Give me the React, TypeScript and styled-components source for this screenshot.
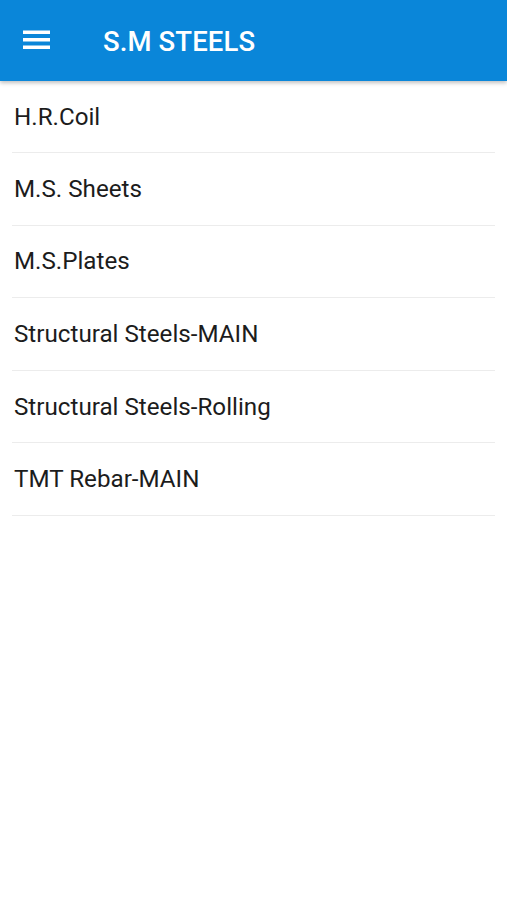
import React from "react";
import styled, { createGlobalStyle } from "styled-components";

const GlobalStyle = createGlobalStyle`
  html, body {
    margin: 0;
    padding: 0;
    background: #ffffff;
    font-family: Roboto, "Liberation Sans", sans-serif;
  }
`;

const Page = styled.div`
  width: 507px;
  min-height: 900px;
  background: #ffffff;
`;

const AppBar = styled.header`
  height: 81px;
  background: #0a86d9;
  display: flex;
  align-items: center;
  box-shadow: 0 2px 4px rgba(0, 0, 0, 0.25);
  position: relative;
  z-index: 2;
`;

const MenuButton = styled.button`
  width: 27px;
  height: 24px;
  margin-left: 23px;
  margin-bottom: 2px;
  padding: 0;
  border: none;
  background: transparent;
  display: flex;
  align-items: center;
  justify-content: center;
  cursor: pointer;
`;

const Title = styled.h1`
  margin: 2px 0 0 53px;
  color: #ffffff;
  font-size: 27.5px;
  font-weight: 500;
  letter-spacing: 0.1px;
`;

const List = styled.ul`
  list-style: none;
  margin: 0;
  padding: 0 12px;
`;

const Item = styled.li<{ $first?: boolean }>`
  height: ${(p) => (p.$first ? "71px" : "71.6px")};
  display: flex;
  align-items: center;
  padding-left: 2px;
  border-bottom: 1px solid #ececec;
  color: #1c1c1c;
  font-size: 24.2px;
  font-weight: 400;
`;

const items = [
  "H.R.Coil",
  "M.S. Sheets",
  "M.S.Plates",
  "Structural Steels-MAIN",
  "Structural Steels-Rolling",
  "TMT Rebar-MAIN",
];

const App = () => {
  return (
    <Page>
      <GlobalStyle />
      <AppBar>
        <MenuButton aria-label="menu">
          <svg width="27" height="20" viewBox="0 0 27 20">
            <rect x="0" y="0.5" width="27" height="3.5" fill="#ffffff" />
            <rect x="0" y="8" width="27" height="3.5" fill="#ffffff" />
            <rect x="0" y="15.5" width="27" height="3.5" fill="#ffffff" />
          </svg>
        </MenuButton>
        <Title>S.M STEELS</Title>
      </AppBar>
      <List>
        {items.map((label, idx) => (
          <Item key={label} $first={idx === 0}>
            {label}
          </Item>
        ))}
      </List>
    </Page>
  );
};

export default App;
